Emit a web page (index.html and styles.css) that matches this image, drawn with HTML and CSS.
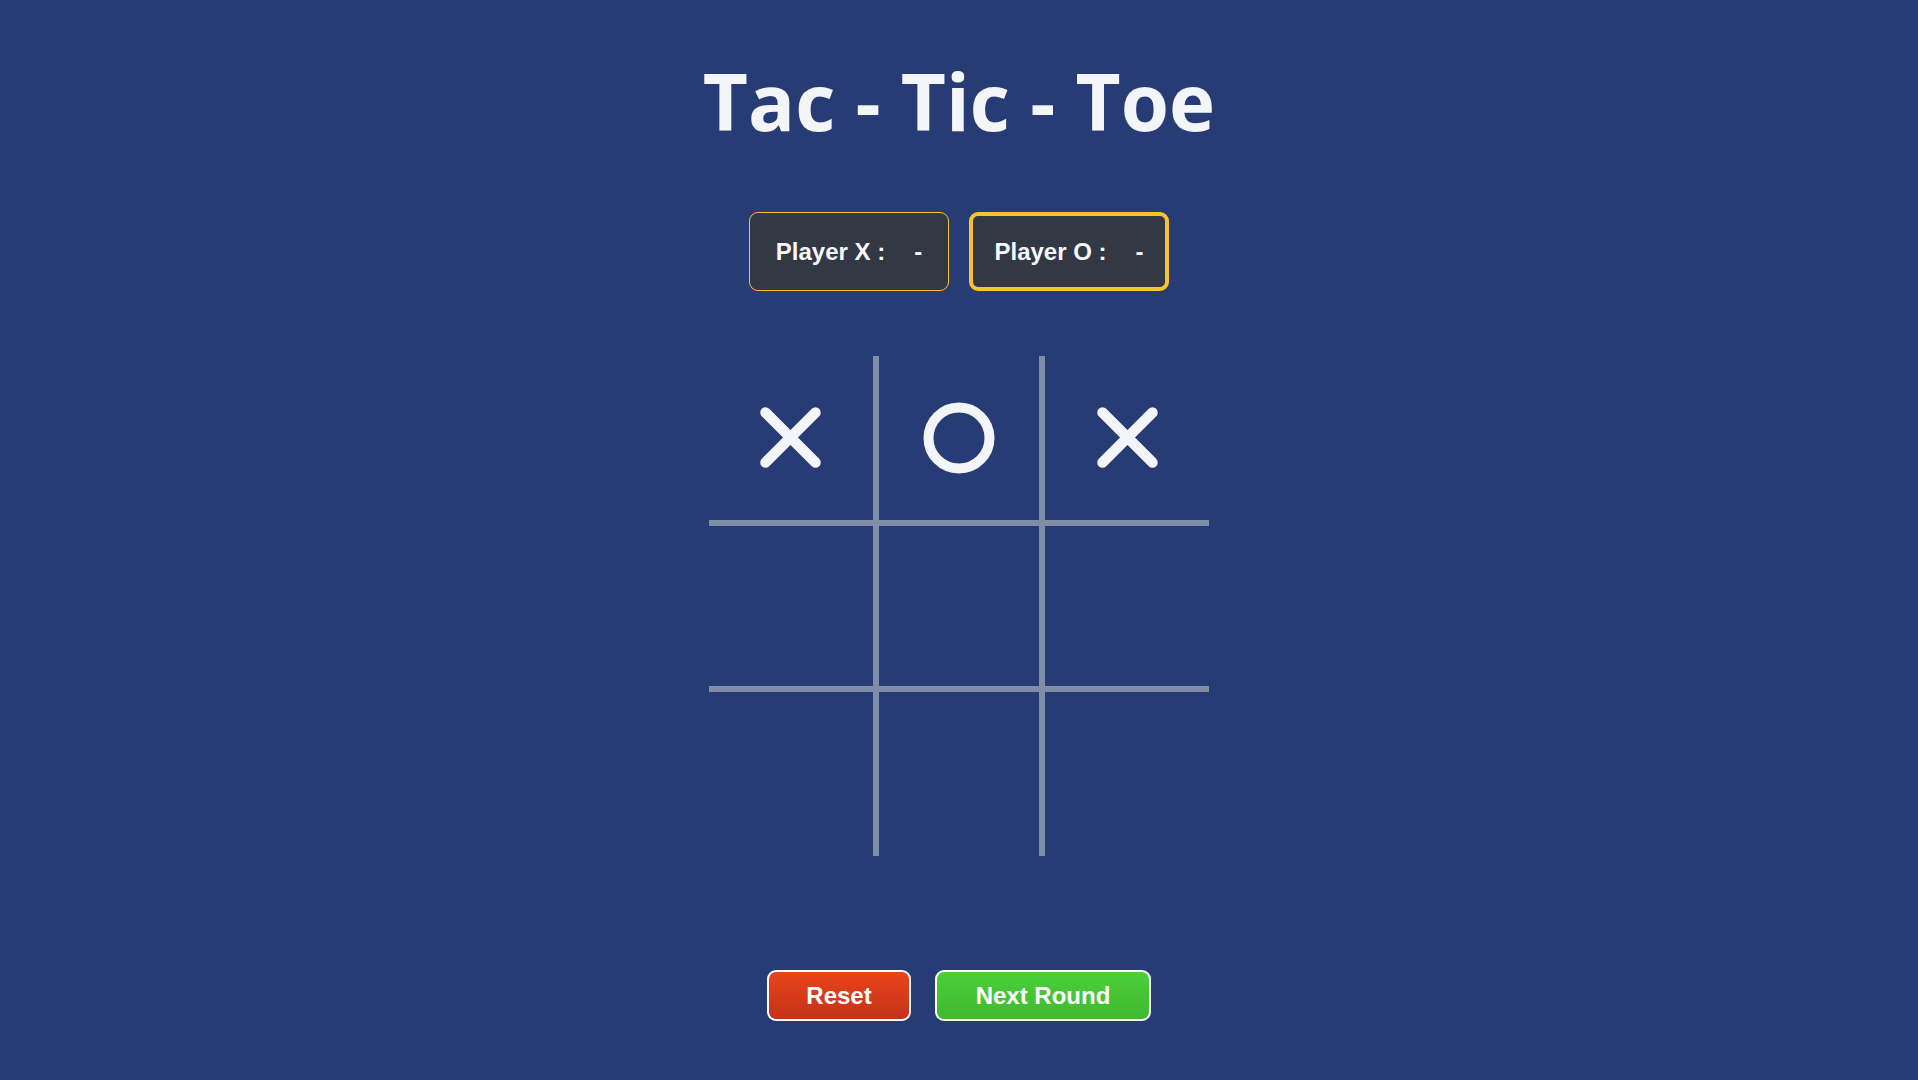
FILE: index.html
```html
<!DOCTYPE html>
<html lang="en">
<head>
<meta charset="utf-8">
<title>Tac - Tic - Toe</title>
<link rel="stylesheet" href="styles.css">
</head>
<body>
<main class="game">
  <h1 class="title">Tac - Tic - Toe</h1>
  <div class="scores">
    <div class="score">Player X :<span class="val">-</span></div>
    <div class="score active">Player O :<span class="val">-</span></div>
  </div>
  <div class="board">
    <div class="cell c1 r1"><svg class="mark" width="61" height="61" viewBox="0 0 61 61"><path d="M5.5 5.5 L55.5 55.5 M55.5 5.5 L5.5 55.5" stroke="#f4f5f9" stroke-width="10.5" stroke-linecap="round" fill="none"/></svg></div>
    <div class="cell c2 r1"><svg class="mark" width="72" height="72" viewBox="0 0 72 72"><circle cx="36" cy="36" r="30.5" stroke="#f4f5f9" stroke-width="10" fill="none"/></svg></div>
    <div class="cell c3 r1"><svg class="mark" width="61" height="61" viewBox="0 0 61 61"><path d="M5.5 5.5 L55.5 55.5 M55.5 5.5 L5.5 55.5" stroke="#f4f5f9" stroke-width="10.5" stroke-linecap="round" fill="none"/></svg></div>
    <div class="cell c1 r2"></div>
    <div class="cell c2 r2"></div>
    <div class="cell c3 r2"></div>
    <div class="cell c1 r3"></div>
    <div class="cell c2 r3"></div>
    <div class="cell c3 r3"></div>
  </div>
  <div class="actions">
    <button class="btn reset">Reset</button>
    <button class="btn next">Next Round</button>
  </div>
</main>
</body>
</html>
```

FILE: styles.css
```css
* { box-sizing: border-box; }
html, body {
  margin: 0;
  padding: 0;
  height: 100%;
}
body {
  background: #273b74;
  font-family: "Liberation Sans", Arial, sans-serif;
  overflow: hidden;
}
.game {
  display: flex;
  flex-direction: column;
  align-items: center;
}
.title {
  margin: 0;
  padding-top: 47px;
  font-family: "Open Sans", "Noto Sans", sans-serif;
  font-weight: 700;
  font-size: 78px;
  line-height: 108px;
  color: #f4f5f9;
  letter-spacing: 0;
}
.scores {
  display: flex;
  gap: 20px;
  margin-top: 57px;
}
.score {
  width: 200px;
  height: 79px;
  display: flex;
  align-items: center;
  justify-content: center;
  background: #333845;
  border: 1px solid #f6c12f;
  border-radius: 9px;
  color: #f6f7fb;
  font-weight: 700;
  font-size: 24px;
}
.score.active {
  border: 4px solid #f9c22e;
}
.score .val {
  margin-left: 29px;
}
.board {
  margin-top: 65px;
  width: 500px;
  height: 500px;
  display: grid;
  grid-template-columns: repeat(3, 1fr);
  grid-template-rows: repeat(3, 1fr);
}
.cell {
  display: flex;
  align-items: center;
  justify-content: center;
  border: 0 solid #7f8da7;
}
.c1 { border-right-width: 3px; }
.c2 { border-left-width: 3px; border-right-width: 3px; }
.c3 { border-left-width: 3px; }
.r1 { border-bottom-width: 3px; }
.r2 { border-top-width: 3px; border-bottom-width: 3px; }
.r3 { border-top-width: 3px; }
.mark { display: block; }
.actions {
  display: flex;
  gap: 24px;
  margin-top: 114px;
}
.btn {
  height: 51px;
  border: 2px solid #ffffff;
  border-radius: 9px;
  color: #ffffff;
  font-family: "Liberation Sans", Arial, sans-serif;
  font-weight: 700;
  font-size: 24px;
  cursor: pointer;
}
.reset {
  width: 144px;
  background: linear-gradient(#e9441a, #c4321a);
}
.next {
  width: 216px;
  background: linear-gradient(#4ccf39, #3fba30);
}
```
